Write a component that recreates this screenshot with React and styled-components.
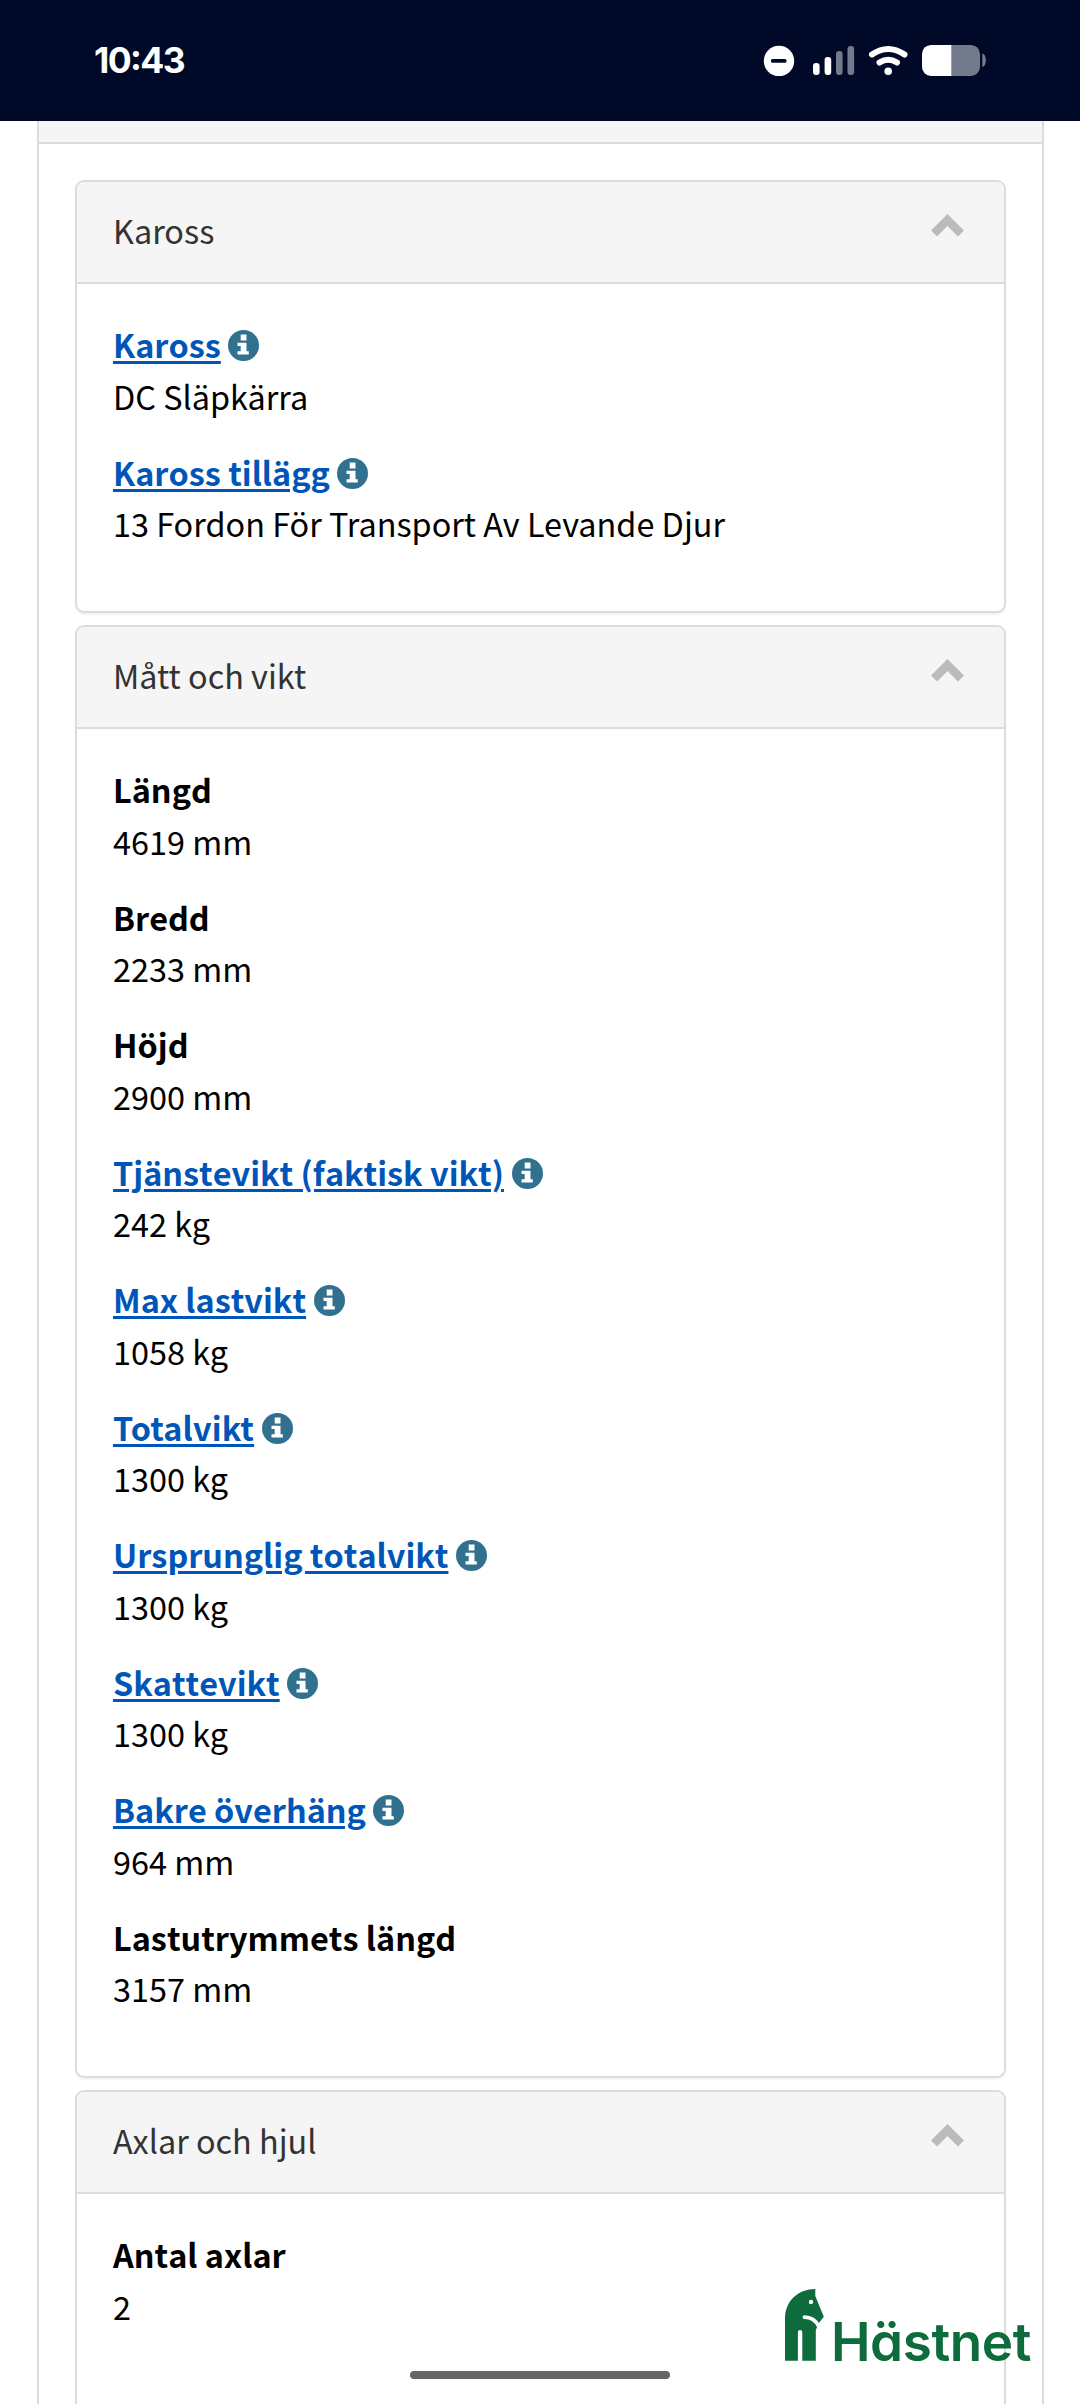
import styled, { createGlobalStyle } from "styled-components";

const GlobalStyle = createGlobalStyle`
  * {
    box-sizing: border-box;
  }
  body {
    margin: 0;
    background: #fff;
    font-family: "Noto Sans CJK SC", "Open Sans", sans-serif;
  }
`;

const Screen = styled.div`
  position: relative;
  display: flex;
  flex-direction: column;
  width: 1080px;
  height: 2404px;
  overflow: hidden;
  background: #fff;
`;

const StatusBar = styled.header`
  display: flex;
  flex: none;
  justify-content: space-between;
  align-items: center;
  height: 121px;
  padding: 0 92px 0 94px;
  background: #000a28;
  color: #fff;
`;

const Clock = styled.span`
  font-family: Inter, sans-serif;
  font-size: 35.5px;
  font-weight: 700;
  letter-spacing: -1.6px;
  font-feature-settings: "case";
`;

const StatusIcons = styled.svg`
  width: 226px;
  height: 33px;
`;

const Page = styled.main`
  display: flex;
  flex: 1;
  flex-direction: column;
  min-height: 0;
  margin: 0 36px 0 37px;
  border: solid #dcdcdc;
  border-width: 0 2px;
`;

const PageHeader = styled.div`
  flex: none;
  height: 23px;
  background: #f5f5f5;
  border-bottom: 2px solid #dcdcdc;
`;

const PanelList = styled.div`
  display: flex;
  flex-direction: column;
  gap: 12px;
  padding: 36px;
`;

const Panel = styled.section`
  flex: none;
  background: #fff;
  border: 2px solid #dcdcdc;
  border-radius: 9px;
  box-shadow: 0 2px 2px rgba(0, 0, 0, 0.05);
  overflow: hidden;
`;

const PanelHeader = styled.div`
  display: flex;
  justify-content: space-between;
  height: 102px;
  padding: 0 40px 0 36px;
  background: #f5f5f5;
  border-bottom: 2px solid #dcdcdc;
`;

const PanelTitle = styled.h2`
  margin: 0;
  font-size: 32.4px;
  font-weight: 400;
  line-height: 96px;
  color: #333;
`;

const Chevron = styled.svg`
  width: 33px;
  height: 23px;
  margin-top: 32px;
`;

const PanelBody = styled.dl`
  margin: 0;
  padding: 36px;
`;

const Row = styled.div`
  height: 127.5px;
`;

const Label = styled.dt`
  display: flex;
  gap: 7.5px;
  height: 51.5px;
  font-size: 32.4px;
  font-weight: 700;
  font-kerning: ${(props) => (props.$kerned ? "normal" : "none")};
  letter-spacing: ${(props) => (props.$kerned ? "0.15px" : "0")};
  line-height: 47px;
  color: #000;
`;

const LabelLink = styled.a`
  color: #0056b8;
  text-decoration: underline;
  text-decoration-thickness: 3px;
  text-underline-offset: 3px;
`;

const InfoIcon = styled.svg`
  width: 31px;
  height: 31px;
  margin-top: 10px;
`;

const Value = styled.dd`
  margin: 0;
  font-size: 32.4px;
  line-height: 47px;
  color: #000;
`;

const Watermark = styled.div`
  position: absolute;
  left: 785px;
  top: 2289px;
  display: flex;
  gap: 6px;
  color: #0e6b3c;
`;

const Horse = styled.svg`
  width: 40px;
  height: 72px;
`;

// cv11 switches Inter to the single-storey "a" of the wordmark
const Brand = styled.span`
  padding-top: 23px;
  font-family: Inter, sans-serif;
  font-size: 53px;
  font-weight: 600;
  line-height: 60px;
  letter-spacing: -0.4px;
  font-feature-settings: "cv11";
`;

const HomeIndicator = styled.div`
  position: absolute;
  left: 410px;
  top: 2371px;
  width: 260px;
  height: 8px;
  border-radius: 4px;
  background: #666;
`;

const panels = [
  {
    title: "Kaross",
    rows: [
      { label: "Kaross", value: "DC Släpkärra", info: true },
      {
        label: "Kaross tillägg",
        value: "13 Fordon För Transport Av Levande Djur",
        info: true,
      },
    ],
  },
  {
    title: "Mått och vikt",
    rows: [
      { label: "Längd", value: "4619 mm" },
      { label: "Bredd", value: "2233 mm" },
      { label: "Höjd", value: "2900 mm" },
      { label: "Tjänstevikt (faktisk vikt)", value: "242 kg", info: true },
      { label: "Max lastvikt", value: "1058 kg", info: true },
      { label: "Totalvikt", value: "1300 kg", info: true, kerned: true },
      { label: "Ursprunglig totalvikt", value: "1300 kg", info: true },
      { label: "Skattevikt", value: "1300 kg", info: true },
      { label: "Bakre överhäng", value: "964 mm", info: true },
      { label: "Lastutrymmets längd", value: "3157 mm" },
    ],
  },
  {
    title: "Axlar och hjul",
    rows: [
      { label: "Antal axlar", value: "2" },
      { label: "", value: "" },
    ],
  },
];

function Info() {
  return (
    <InfoIcon viewBox="0 0 31 31">
      <circle cx="15.5" cy="15.5" r="15.5" fill="#31708f" />
      <path
        fill="#fff"
        d="M12.7 4.5h5.800v6h-5.800zM9.500 12.800h9v8.400h2.300v3.200H9.500v-3.200h3.200V16H9.500z"
      />
    </InfoIcon>
  );
}

function Status() {
  return (
    <StatusIcons viewBox="762 44 226 33">
      <circle cx="779" cy="60.9" r="15.2" fill="#fff" />
      <rect x="771" y="59" width="15.5" height="3.8" rx="1.5" fill="#000a28" />
      <rect x="813" y="63" width="6.6" height="12" rx="3" fill="#fff" />
      <rect x="824.6" y="57" width="6.6" height="18" rx="3" fill="#fff" />
      <rect x="836" y="51" width="6.6" height="24" rx="3" fill="#737a8c" />
      <rect x="847.5" y="46" width="6.6" height="29" rx="3" fill="#737a8c" />
      <g fill="none" stroke="#fff" strokeWidth="6" strokeLinecap="round">
        <path d="M872 54.500Q888.200 43.500 904.500 54.500" />
        <path d="M879.500 62.500Q888.200 57 897 62.500" />
      </g>
      <circle cx="888.2" cy="71.2" r="3.8" fill="#fff" />
      <path
        d="M951.500 44.900H971a9 9 0 0 1 9 9v13a9 9 0 0 1-9 9h-19.500z"
        fill="#737a8c"
      />
      <path
        d="M951.500 44.900H931a9 9 0 0 0-9 9v13a9 9 0 0 0 9 9h20.500z"
        fill="#fff"
      />
      <path d="M982.300 53.500q3.500 1 3.500 6.800t-3.500 6.800z" fill="#737a8c" />
    </StatusIcons>
  );
}

export default function App() {
  return (
    <>
      <GlobalStyle />
      <Screen>
        <StatusBar>
          <Clock>10:43</Clock>
          <Status />
        </StatusBar>
        <Page>
          <PageHeader />
          <PanelList>
            {panels.map((panel) => (
              <Panel key={panel.title}>
                <PanelHeader>
                  <PanelTitle>{panel.title}</PanelTitle>
                  <Chevron viewBox="0 0 33 23">
                    <path
                      fill="#bbb"
                      d="M16.500 0L33 16.500l-6 6L16.500 12 6 22.500l-6-6z"
                    />
                  </Chevron>
                </PanelHeader>
                <PanelBody>
                  {panel.rows.map((row) => (
                    <Row key={row.label}>
                      <Label $kerned={row.kerned}>
                        {row.info ? (
                          <LabelLink>{row.label}</LabelLink>
                        ) : (
                          row.label
                        )}
                        {row.info && <Info />}
                      </Label>
                      <Value>{row.value}</Value>
                    </Row>
                  ))}
                </PanelBody>
              </Panel>
            ))}
          </PanelList>
        </Page>
        <Watermark>
          <Horse viewBox="0 0 40 72">
            <path
              fill="currentColor"
              d="M0 71.700V30C0 12 13 0 30.300 0v7l8.500 20.700-5 6.300-3 7v30.700H17.300V43.200a2.200 2.200 0 0 0-4.400 0v28.500z"
            />
            <path
              d="M19.500 28.200Q29 28.200 34 37.500"
              fill="none"
              stroke="#fff"
              strokeWidth="3.8"
              strokeLinecap="round"
            />
            <circle cx="26" cy="13" r="2.2" fill="#fff" />
          </Horse>
          <Brand>Hästnet</Brand>
        </Watermark>
        <HomeIndicator />
      </Screen>
    </>
  );
}
